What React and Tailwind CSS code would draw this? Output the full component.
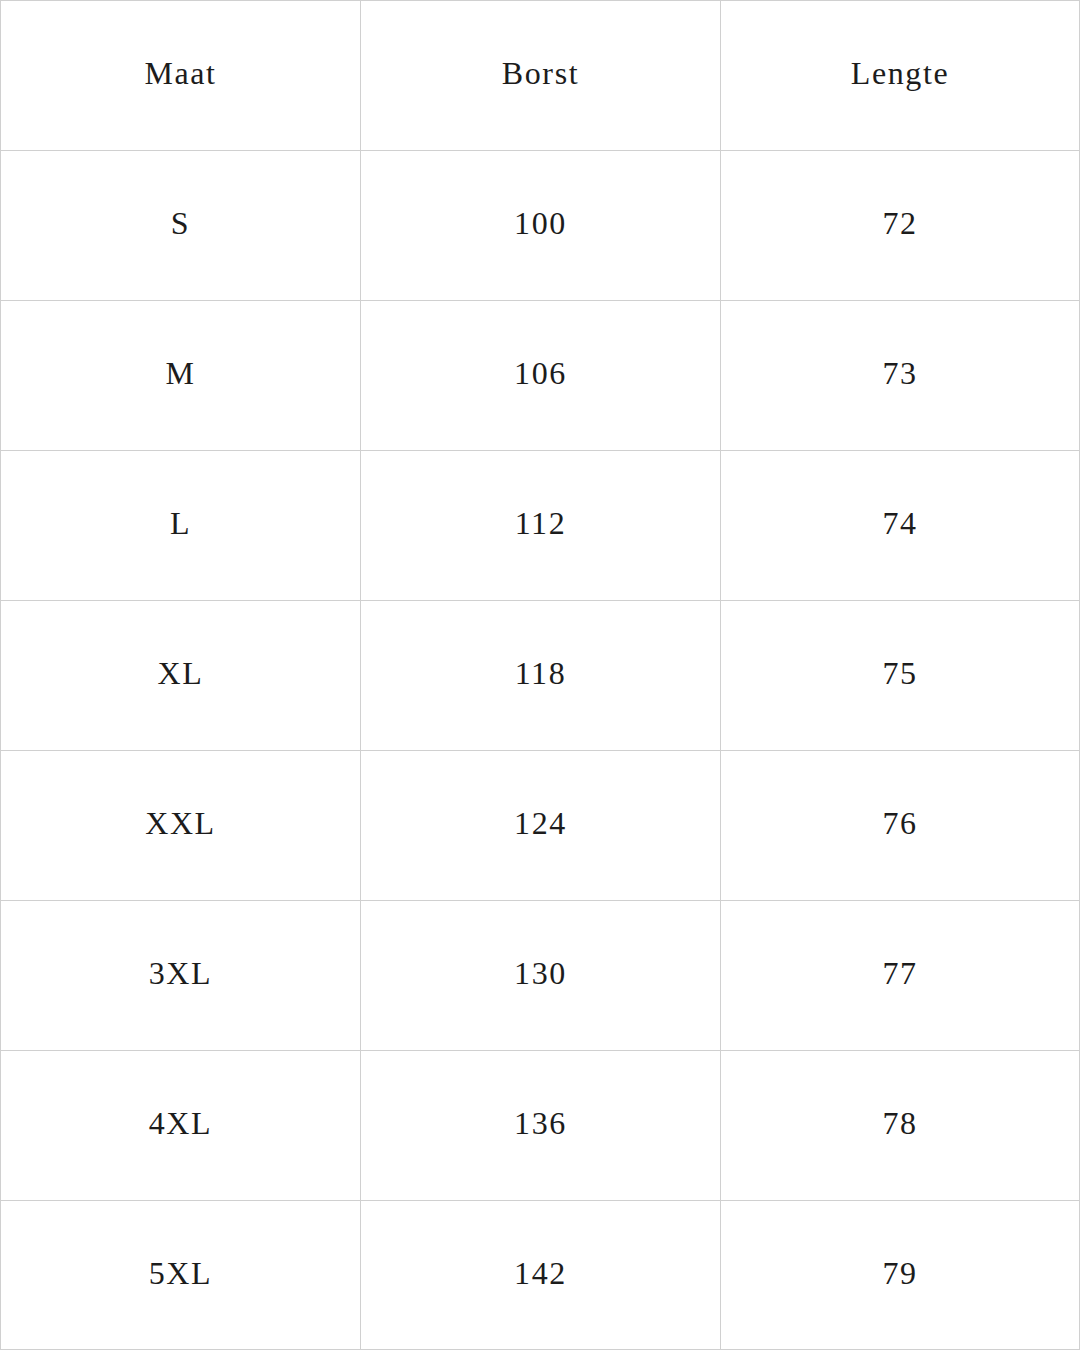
import React from 'react';

const rows = [
    ['S', '100', '72'],
    ['M', '106', '73'],
    ['L', '112', '74'],
    ['XL', '118', '75'],
    ['XXL', '124', '76'],
    ['3XL', '130', '77'],
    ['4XL', '136', '78'],
    ['5XL', '142', '79'],
];

export default function App() {
    const all = [['Maat', 'Borst', 'Lengte'], ...rows];
    return (
        <div className="w-[1080px] h-[1350px] bg-white grid grid-cols-[360px_360px_360px] grid-rows-[repeat(9,150px)] font-['Liberation_Serif',serif] text-[#1c1c1c]">
            {all.map((row, r) =>
                row.map((cell, c) => (
                    <div
                        key={r + '-' + c}
                        className={
                            'flex items-center justify-center border-l border-t border-[#d0d0d0] text-[32px] tracking-[1.6px] ' +
                            (c === 2 ? 'border-r ' : '') +
                            (r === all.length - 1 ? 'border-b' : '')
                        }
                    >
                        <span className="-mt-[5px]">{cell}</span>
                    </div>
                ))
            )}
        </div>
    );
}
